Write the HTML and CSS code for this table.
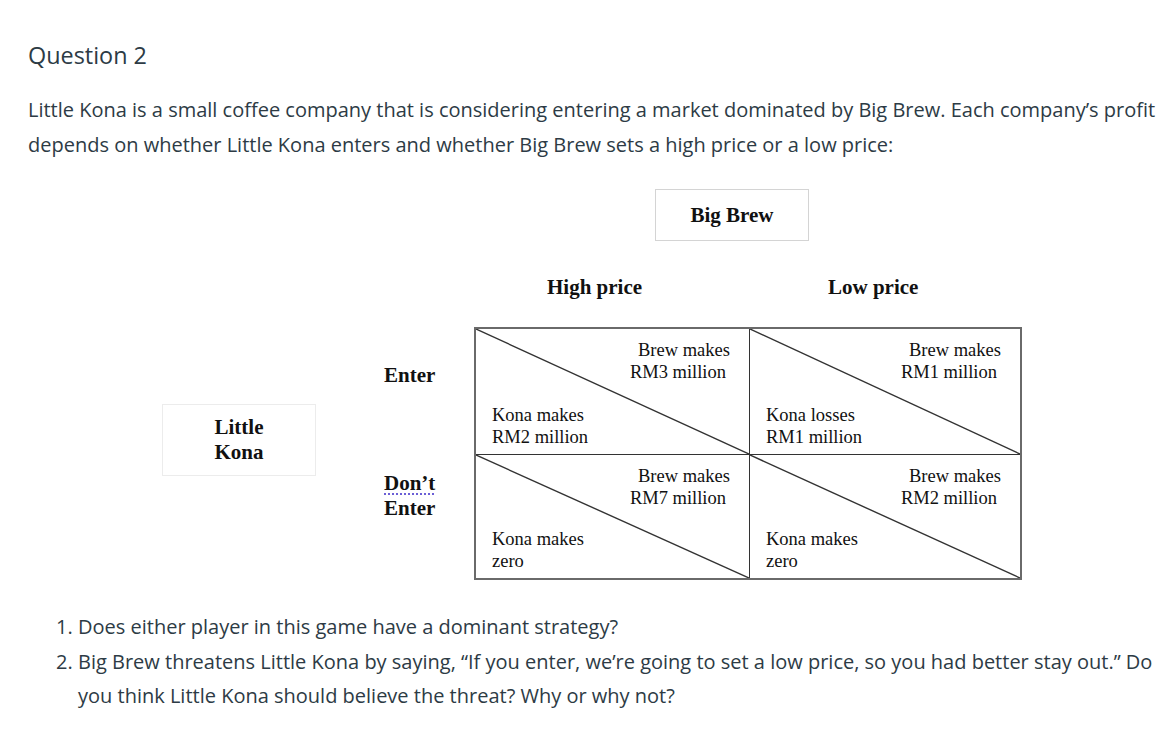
FILE: index.html
```html
<!DOCTYPE html>
<html>
<head>
<meta charset="utf-8">
<link rel="stylesheet" href="styles.css">
</head>
<body>
<div class="page">
  <h2 class="title">Question 2</h2>
  <p class="intro">Little Kona is a small coffee company that is considering entering a market dominated by Big Brew. Each company’s profit depends on whether Little Kona enters and whether Big Brew sets a high price or a low price:</p>
  <div class="figure">
    <div class="node bigbrew">Big Brew</div>
    <div class="node high">High price</div>
    <div class="node low">Low price</div>
    <div class="node kona">Little<br>Kona</div>
    <div class="node enter">Enter</div>
    <div class="node dont"><span class="spell">Don’t</span><br>Enter</div>
    <div class="matrix">
      <div class="cell">
        <svg class="diag" viewBox="0 0 100 100" preserveAspectRatio="none"><line x1="0" y1="0" x2="100" y2="100"/></svg>
        <div class="brew">Brew makes<br><span class="l2">RM3 million</span></div>
        <div class="konat">Kona makes<br>RM2 million</div>
      </div>
      <div class="cell right">
        <svg class="diag" viewBox="0 0 100 100" preserveAspectRatio="none"><line x1="0" y1="0" x2="100" y2="100"/></svg>
        <div class="brew">Brew makes<br><span class="l2">RM1 million</span></div>
        <div class="konat">Kona losses<br>RM1 million</div>
      </div>
      <div class="cell bottom">
        <svg class="diag" viewBox="0 0 100 100" preserveAspectRatio="none"><line x1="0" y1="0" x2="100" y2="100"/></svg>
        <div class="brew">Brew makes<br><span class="l2">RM7 million</span></div>
        <div class="konat">Kona makes<br>zero</div>
      </div>
      <div class="cell right bottom">
        <svg class="diag" viewBox="0 0 100 100" preserveAspectRatio="none"><line x1="0" y1="0" x2="100" y2="100"/></svg>
        <div class="brew">Brew makes<br><span class="l2">RM2 million</span></div>
        <div class="konat">Kona makes<br>zero</div>
      </div>
    </div>
  </div>
  <ol class="questions">
    <li>Does either player in this game have a dominant strategy?</li>
    <li>Big Brew threatens Little Kona by saying, “If you enter, we’re going to set a low price, so you had better stay out.” Do you think Little Kona should believe the threat? Why or why not?</li>
  </ol>
</div>
</body>
</html>
```
FILE: styles.css
```css
html, body {
  margin: 0;
  padding: 0;
  background: #ffffff;
}
.page {
  padding: 0 0 0 28px;
  font-family: "Open Sans", "Liberation Sans", sans-serif;
  color: #2d3b45;
}
.title {
  margin: 0;
  padding-top: 40px;
  font-size: 23.4px;
  line-height: 30px;
  font-weight: 400;
  color: #2d3b45;
}
.intro {
  margin: 22px 0 0 0;
  font-size: 20px;
  line-height: 35px;
  width: 1140px;
}
.figure {
  position: relative;
  margin: 26px 0 0 132px;
  width: 862px;
  height: 393px;
  font-family: "Liberation Serif", "Times New Roman", serif;
  color: #111;
}
.node {
  position: absolute;
  font-weight: 700;
  font-size: 21px;
  line-height: 25px;
}
.bigbrew {
  left: 495px;
  top: 1px;
  width: 152px;
  height: 50px;
  box-sizing: content-box;
  border: 1.5px solid #d4d4d4;
  display: flex;
  align-items: center;
  justify-content: center;
  padding-bottom: 0;
}
.bigbrew {
  line-height: 21px;
}
.high { left: 387px; top: 87px; }
.low { left: 668px; top: 87px; }
.kona {
  left: 2px;
  top: 216px;
  width: 152px;
  height: 70px;
  border: 1px solid #ececec;
  display: flex;
  align-items: center;
  justify-content: center;
  text-align: left;
}
.enter { left: 224px; top: 175px; }
.dont { left: 224px; top: 283px; }
.spell {
  text-decoration: underline dotted #6b5fd6;
  text-decoration-thickness: 2px;
  text-underline-offset: 3px;
}
.matrix {
  position: absolute;
  left: 314px;
  top: 139px;
  width: 548px;
  height: 253px;
  box-sizing: border-box;
  border: 2px solid #6a6a6a;
  display: grid;
  grid-template-columns: 273px 1fr;
  grid-template-rows: 125px 1fr;
}
.cell {
  position: relative;
  display: flex;
  flex-direction: column;
  justify-content: space-between;
  padding: 10px 19px 6px 16px;
  font-size: 18.5px;
  line-height: 22px;
}
.cell.right { border-left: 1.5px solid #333; }
.cell.bottom { border-top: 1.5px solid #333; }
.diag {
  position: absolute;
  left: 0;
  top: 0;
  width: 100%;
  height: 100%;
}
.diag line {
  stroke: #333;
  stroke-width: 1.4;
  vector-effect: non-scaling-stroke;
}
.brew {
  position: relative;
  align-self: flex-end;
  text-align: right;
}
.l2 {
  margin-right: 4px;
}
.konat {
  position: relative;
  align-self: flex-start;
}
.questions {
  margin: 29px 0 0 0;
  padding-left: 50px;
  font-size: 20px;
  line-height: 34.5px;
  width: 1090px;
}
```
